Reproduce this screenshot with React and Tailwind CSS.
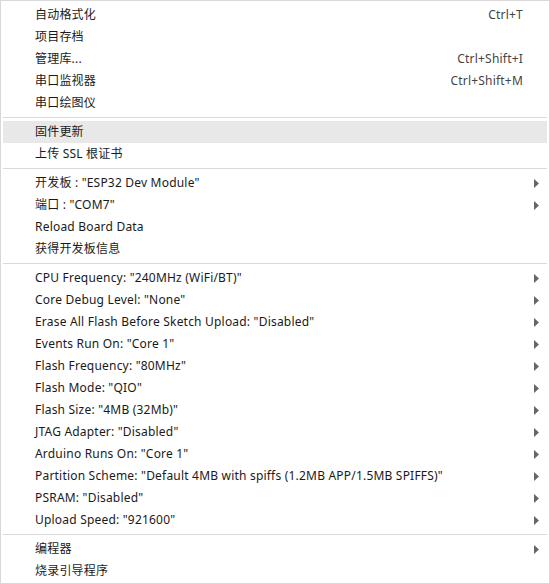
import React from "react";

const sections = [
  [
    { label: "自动格式化", shortcut: "Ctrl+T" },
    { label: "项目存档" },
    { label: "管理库...", shortcut: "Ctrl+Shift+I" },
    { label: "串口监视器", shortcut: "Ctrl+Shift+M" },
    { label: "串口绘图仪" },
  ],
  [
    { label: "固件更新", active: true },
    { label: "上传 SSL 根证书" },
  ],
  [
    { label: "开发板 : \"ESP32 Dev Module\"", sub: true },
    { label: "端口 : \"COM7\"", sub: true },
    { label: "Reload Board Data" },
    { label: "获得开发板信息" },
  ],
  [
    { label: "CPU Frequency: \"240MHz (WiFi/BT)\"", sub: true },
    { label: "Core Debug Level: \"None\"", sub: true },
    { label: "Erase All Flash Before Sketch Upload: \"Disabled\"", sub: true },
    { label: "Events Run On: \"Core 1\"", sub: true },
    { label: "Flash Frequency: \"80MHz\"", sub: true },
    { label: "Flash Mode: \"QIO\"", sub: true },
    { label: "Flash Size: \"4MB (32Mb)\"", sub: true },
    { label: "JTAG Adapter: \"Disabled\"", sub: true },
    { label: "Arduino Runs On: \"Core 1\"", sub: true },
    { label: "Partition Scheme: \"Default 4MB with spiffs (1.2MB APP/1.5MB SPIFFS)\"", sub: true },
    { label: "PSRAM: \"Disabled\"", sub: true },
    { label: "Upload Speed: \"921600\"", sub: true },
  ],
  [
    { label: "编程器", sub: true },
    { label: "烧录引导程序" },
  ],
];

function Arrow() {
  return (
    <svg width="5" height="9" viewBox="0 0 5 9" className="block">
      <path d="M0 0 L5 4.5 L0 9 Z" fill="#666" />
    </svg>
  );
}

function Row({ item }) {
  return (
    <div
      className={`flex h-[22px] items-center pl-[32px] pr-[8px] ${
        item.active ? "bg-[#e8e8e8]" : ""
      }`}
    >
      <span className="flex-1 whitespace-nowrap text-[#1a1a1a]">{item.label}</span>
      {item.shortcut && (
        <span className="mr-[16px] whitespace-nowrap text-[#444]">{item.shortcut}</span>
      )}
      {item.sub && <Arrow />}
    </div>
  );
}

export default function App() {
  return (
    <div
      className="box-border flex h-[584px] w-[550px] flex-col border border-[#d9d9d9] bg-white px-[2px] pb-px pt-[3px] text-[12px] leading-none tracking-[0.2px]"
      style={{ fontFamily: '"Noto Sans", "Noto Sans CJK SC", sans-serif' }}
    >
      {sections.map((sec, i) => (
        <React.Fragment key={i}>
          {i > 0 && <div className="mb-[3px] mt-[3px] h-px bg-[#dadada]" />}
          {sec.map((item, j) => (
            <Row key={j} item={item} />
          ))}
        </React.Fragment>
      ))}
    </div>
  );
}
